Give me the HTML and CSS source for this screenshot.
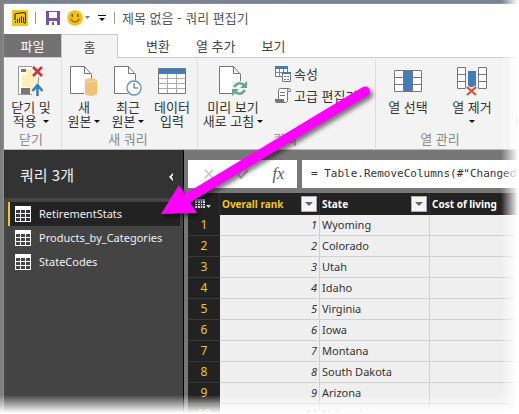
FILE: index.html
```html
<!DOCTYPE html>
<html lang="ko">
<head>
<meta charset="utf-8">
<title>제목 없음 - 쿼리 편집기</title>
<link rel="stylesheet" href="styles.css">
</head>
<body>
<div class="window">
  <header class="titlebar">
    <svg class="logo" width="16" height="16" viewBox="0 0 16 16"><path fill="#f2c811" d="M0 0h16v16H0z"/><path d="M3 10V4.500q0-1 1-1l8-1q1.500 0 1.500 1.500v8q0 1-1.500 1" fill="none" stroke="#222" stroke-width="1.100"/><path fill="#222" d="M3 11h1v2H3zM5 9h1v4H5zM7 8h1v5H7zM9 6h1v7H9zM11 7h1v6h-1z"/></svg>
    <span class="divider"></span>
    <button class="tool" aria-label="저장"><svg width="14" height="14" viewBox="0 0 14 14"><path fill="#7d4fa8" d="M0 0h14v14H0z"/><path fill="#fff" d="M3 1h8v6H3zM3 10h8v4H8v-3H6v3H3z"/></svg></button>
    <button class="tool smile" aria-label="피드백"><svg width="24" height="16" viewBox="0 0 24 16"><circle cx="8" cy="8" r="7.800" fill="#f5bf0b"/><path fill="#555" d="M4.500 4H6v3H4.500zM10 4h1.500v3H10z"/><path d="M3.500 9q4.500 6 9 0" fill="none" stroke="#6b5a1d" stroke-width="1.200"/><path fill="#777" d="M18 6h5l-2.500 3z"/></svg></button>
    <button class="tool" aria-label="도구 모음"><svg width="8" height="8" viewBox="0 0 8 8"><path fill="#111" d="M0 1h8v1H0zM1 4h6L4 7z"/></svg></button>
    <span class="divider"></span>
    <span class="title">제목 없음 - 쿼리 편집기</span>
  </header>
  <nav class="tabs">
    <button class="tab file">파일</button><button class="tab active">홈</button><button class="tab">변환</button><button class="tab">열 추가</button><button class="tab">보기</button>
  </nav>
  <section class="ribbon">
    <div class="group">
      <div class="commands">
        <button class="command wide"><svg width="26" height="30" viewBox="0 0 26 30"><path d="M.5.500h20v28H.5z" fill="#fff" stroke="#999"/><path fill="#fff0b5" d="M4 9h4V3h6v6l6 5v6h-5v8h-3v-7H4z"/><path fill="#777" d="M3 3h5v3H3zM3 22h9v6H3z"/><path fill="#f3f3f3" d="M14 0h12v11H14zM14 17h12v13H14z"/><path d="m15 1 9 9m0-9-9 9" stroke="#d12f36" stroke-width="2.600"/><path d="M19.500 30V19m-5 6 5-6 5 6" fill="none" stroke="#417db8" stroke-width="2.600"/></svg><span>닫기 및<br>적용 <i class="caret"></i></span></button>
      </div>
      <div class="caption">닫기</div>
    </div>
    <div class="group">
      <div class="commands">
        <button class="command"><svg width="28" height="30" viewBox="0 0 28 30"><path d="M.5.500h14l7 8v19H.5z" fill="#fff" stroke="#777"/><path d="M14.500.500v7h7" fill="none" stroke="#777"/><path d="M14 13h14v17H14z" fill="#f3f3f3"/><path fill="#efc376" d="M15 14q6-4 12 0v14q-6 4-12 0z"/><path d="M15 14q6 4 12 0" stroke="#f7dda9" fill="none"/></svg><span>새<br>원본<i class="caret"></i></span></button>
        <button class="command"><svg width="28" height="30" viewBox="0 0 28 30"><path d="M.5.500h14l7 8v19H.5z" fill="#fff" stroke="#777"/><path d="M14.500.500v7h7" fill="none" stroke="#777"/><circle cx="20" cy="22" r="8" fill="#f3f3f3"/><circle cx="20" cy="22" r="7" fill="#fff" stroke="#5c91c7" stroke-width="1.300"/><path d="M20 17v5h4" fill="none" stroke="#555"/></svg><span>최근<br>원본<i class="caret"></i></span></button>
        <button class="command"><svg width="28" height="30" viewBox="0 0 28 30"><path d="M.5 2.500h27v25H.5z" fill="#fff" stroke="#777"/><path fill="#417db8" d="M1 3h26v5H1z"/><path d="M1 12.500h26M1 17.500h26M1 22.500h26M9.500 8v19M18.500 8v19" stroke="#aaa"/></svg><span>데이터<br>입력</span></button>
      </div>
      <div class="caption">새 쿼리</div>
    </div>
    <div class="group query">
      <div class="commands">
        <button class="command refresh"><svg width="28" height="30" viewBox="0 0 28 30"><path d="M.5.500h14l7 8v19H.5z" fill="#fff" stroke="#777"/><path d="M14.500.500v7h7" fill="none" stroke="#777"/><path fill="#f3f3f3" d="M13 15h15v15H13z"/><path d="M15 21q5-7 11-1m0 4q-5 7-11 1" fill="none" stroke="#6da58c" stroke-width="2.500"/><path fill="#6da58c" d="M28 15v7h-7zM13 30v-7h7z"/></svg><span>미리 보기<br>새로 고침<i class="caret"></i></span></button>
        <div class="stack">
          <button class="small"><svg width="16" height="16" viewBox="0 0 16 16"><path d="M.5.500h12v10H.5z" fill="#fff" stroke="#777"/><path fill="#417db8" d="M0 0h13v3H0z"/><path d="M4.500 3v8M8.500 3v8M0 6.500h13" stroke="#888"/><path d="M7.500 6.500h8v9h-8z" fill="#fff" stroke="#777"/><path fill="#417db8" d="M7 6h9v2H7z"/><path fill="#777" d="M9 10h2v1H9zM12 10h2v1h-2zM9 13h2v1H9zM12 13h2v1h-2z"/></svg>속성</button>
          <button class="small"><svg width="16" height="16" viewBox="0 0 16 16"><path d="M3.500 11V2.500q0-2 2-2h8q2 0 2 2v1h-3v9q0 2-2 2H2.500" fill="#fff" stroke="#777"/><path d="M12.500 3.500v-1q0-2 1.500-2M5 4.500h5M5 7.500h5" fill="none" stroke="#777"/><path fill="#777" d="M0 11h9v2q0 2 2 2H2q-2 0-2-2z"/></svg>고급 편집기</button>
        </div>
      </div>
      <div class="caption">쿼리</div>
    </div>
    <div class="group">
      <div class="commands">
        <button class="command column"><svg width="28" height="30" viewBox="0 0 28 30"><path d="M.5 4.500h27v21H.5z" fill="#fff" stroke="#777"/><path fill="#417db8" d="M10 5h8v20h-8z"/><path d="M9.500 4v22M18.500 4v22M1 11.500h8M1 18.500h8M19 11.500h8M19 18.500h8" stroke="#777"/></svg><span>열 선택</span></button>
        <button class="command column"><svg width="30" height="30" viewBox="0 0 30 30"><path d="M.5 1.500h8v21h-8zM21.500 1.500h8v21h-8z" fill="#fff" stroke="#777"/><path d="M0 8.500h8M0 15.500h8M22 8.500h8M22 15.500h8" stroke="#777"/><path fill="#417db8" d="M11 5h8v16h-8z"/><path d="m10 21 9 8m0-8-9 8" stroke="#f3f3f3" stroke-width="4"/><path d="m10 21 9 8m0-8-9 8" stroke="#d65336" stroke-width="2.200"/></svg><span>열 제거<br><i class="caret below"></i></span></button>
      </div>
      <div class="caption">열 관리</div>
    </div>
    <div class="group last"><button class="command">R</button></div>
  </section>
  <div class="workspace">
    <aside class="sidebar">
      <div class="side-head"><span>쿼리 3개</span><button class="collapse" aria-label="접기"><svg width="4" height="8" viewBox="0 0 4 8"><path fill="#fff" d="M4 0v2L2.500 4 4 6v2L0 4z"/></svg></button></div>
      <div class="queries">
        <button class="item selected"><svg width="16" height="16" viewBox="0 0 16 16"><path fill="#fff" d="M0 0h16v16H0z"/><path fill="#333" d="M1 4h4v3H1zM6 4h4v3H6zM11 4h4v3h-4zM1 8h4v3H1zM6 8h4v3H6zM11 8h4v3h-4zM1 12h4v3H1zM6 12h4v3H6zM11 12h4v3h-4z"/></svg>RetirementStats</button>
        <button class="item"><svg width="16" height="16" viewBox="0 0 16 16"><path fill="#fff" d="M0 0h16v16H0z"/><path fill="#444" d="M1 4h4v3H1zM6 4h4v3H6zM11 4h4v3h-4zM1 8h4v3H1zM6 8h4v3H6zM11 8h4v3h-4zM1 12h4v3H1zM6 12h4v3H6zM11 12h4v3h-4z"/></svg>Products_by_Categories</button>
        <button class="item"><svg width="16" height="16" viewBox="0 0 16 16"><path fill="#fff" d="M0 0h16v16H0z"/><path fill="#444" d="M1 4h4v3H1zM6 4h4v3H6zM11 4h4v3h-4zM1 8h4v3H1zM6 8h4v3H6zM11 8h4v3h-4zM1 12h4v3H1zM6 12h4v3H6zM11 12h4v3h-4z"/></svg>StateCodes</button>
      </div>
    </aside>
    <main class="main">
      <div class="formula-bar">
        <div class="formula-tools">
          <button aria-label="취소"><svg width="10" height="10" viewBox="0 0 10 10"><path d="m1 1 8 8m0-8L1 9" stroke="#c4c4c4" stroke-width="1.600"/></svg></button>
          <button aria-label="확인"><svg width="12" height="10" viewBox="0 0 12 10"><path d="m1 5 3 4 7-8" fill="none" stroke="#bbb" stroke-width="2"/></svg></button>
          <button class="fx">fx</button>
        </div>
        <input class="formula" aria-label="수식" value="= Table.RemoveColumns(#&quot;Changed">
      </div>
      <table class="grid">
        <colgroup><col class="c-num"><col class="c-rank"><col class="c-state"><col></colgroup>
        <thead><tr>
          <th><button class="corner" aria-label="표"><svg width="17" height="10" viewBox="0 0 17 10"><path fill="#ddd" d="M0 0h10v9H0z"/><path fill="#65a0b8" d="M0 0h10v2H0z"/><path d="M0 4.500h10M0 6.500h10M2.500 2v7M5.500 2v7M7.500 2v7" stroke="#444"/><path fill="#ddd" d="M11 6h5l-2.500 3z"/></svg></button></th>
          <th class="rank-head"><div class="head">Overall rank<button class="filter" aria-label="필터"><svg width="8" height="4" viewBox="0 0 8 4"><path fill="#666" d="M0 0h8L4 4z"/></svg></button></div></th>
          <th><div class="head">State<button class="filter" aria-label="필터"><svg width="8" height="4" viewBox="0 0 8 4"><path fill="#666" d="M0 0h8L4 4z"/></svg></button></div></th>
          <th><div class="head">Cost of living</div></th>
        </tr></thead>
        <tbody>
          <tr><th>1</th><td>1</td><td>Wyoming</td><td></td></tr>
          <tr><th>2</th><td>2</td><td>Colorado</td><td></td></tr>
          <tr><th>3</th><td>3</td><td>Utah</td><td></td></tr>
          <tr><th>4</th><td>4</td><td>Idaho</td><td></td></tr>
          <tr><th>5</th><td>5</td><td>Virginia</td><td></td></tr>
          <tr><th>6</th><td>6</td><td>Iowa</td><td></td></tr>
          <tr><th>7</th><td>7</td><td>Montana</td><td></td></tr>
          <tr><th>8</th><td>8</td><td>South Dakota</td><td></td></tr>
          <tr><th>9</th><td>9</td><td>Arizona</td><td></td></tr>
          <tr><th>10</th><td>10</td><td>Nebraska</td><td></td></tr>
        </tbody>
      </table>
    </main>
  </div>
</div>
<svg class="pointer" width="230" height="150" viewBox="150 80 230 150"><path d="M365 91.500 188 198" stroke="#f0f" stroke-width="10" stroke-linecap="round"/><path fill="#f0f" d="m161 214 18-29 18 28z"/></svg>
<div class="fade"></div>
</body>
</html>
```
FILE: styles.css
```css
* { box-sizing: border-box; }
body {
  margin: 0;
  height: 100vh;
  overflow: hidden;
  background: #808080;
  padding: 3px 0 0 3px;
  font: 11px/14px "Noto Sans", "Noto Sans CJK KR", sans-serif;
  color: #333;
}
button {
  font: inherit;
  color: inherit;
  background: none;
  border: 0;
  padding: 0;
  margin: 0;
}
svg { display: block; flex: none; }
.window {
  height: 100%;
  display: flex;
  flex-direction: column;
  overflow: hidden;
  background: #fff;
  border: solid #6a93d4;
  border-width: 1px 0 0 1px;
}
.titlebar, .tabs, .ribbon {
  flex: none;
  display: flex;
  font-family: "Noto Sans CJK KR", sans-serif;
  font-size: 13px;
  white-space: nowrap;
}
.titlebar {
  height: 30px;
  align-items: center;
  padding: 0 0 2px 8px;
  color: #555;
}
.divider { width: 1px; height: 12px; background: #999; margin: 0 7px; }
.tool { margin-left: 3px; }
.tool + .tool { margin-left: 7px; }
.tool + .divider { margin-left: 8px; }
.tabs { height: 24px; border-bottom: 1px solid #ccc; }
.tab { padding: 0 13px; height: 23px; color: #444; }
.tab.file { width: 57px; background: #727272; color: #fff; }
.tab.active {
  width: 57px;
  height: 24px;
  margin-right: 15px;
  background: #f3f3f3;
  border: 1px solid #ccc;
  border-bottom: 0;
}
.ribbon {
  height: 92px;
  background: #f3f3f3;
  border-bottom: 1px solid #bbb;
  padding: 2px 0 1px;
}
.group {
  flex: none;
  display: flex;
  flex-direction: column;
  justify-content: space-between;
  padding: 6px 3px 0 0;
  border-right: 1px solid #ddd;
}
.commands { display: flex; }
.command {
  width: 44px;
  display: flex;
  flex-direction: column;
  align-items: center;
  gap: 4px;
}
.command.wide { width: 54px; }
.command.refresh { width: 70px; }
.command.column { width: 64px; }
.caption { text-align: center; color: #888; line-height: 18px; }
.caret {
  display: inline-block;
  margin-left: 3px;
  vertical-align: 3px;
  border: 3px solid transparent;
  border-top-color: #111;
  border-bottom: 0;
}
.caret.below { margin-left: 0; }
.query { width: 178px; }
.stack { display: flex; flex-direction: column; gap: 6px; padding-left: 7px; }
.small { display: flex; align-items: center; gap: 3px; }
.group.last { border: 0; padding: 54px 0 0 7px; color: #111; }
.group.last .command { width: auto; }
.workspace { flex: 1; display: flex; min-height: 0; }
.sidebar {
  flex: none;
  width: 180px;
  background: #444;
  border-right: 1px solid #000;
  color: #f0f0f0;
}
.side-head {
  height: 48px;
  display: flex;
  align-items: center;
  justify-content: space-between;
  padding: 2px 10px 0 16px;
  background: #333;
  font: 15px/20px "Noto Sans CJK KR", sans-serif;
}
.collapse { padding-top: 3px; }
.queries { padding: 4px 3px 0 4px; }
.item {
  width: 100%;
  height: 24px;
  display: flex;
  align-items: center;
  gap: 8px;
  padding-left: 5px;
  border-left: 2px solid transparent;
}
.item.selected { background: #222; border-color: #f2c811; }
.main {
  flex: 1;
  min-width: 0;
  padding: 10px 0 0 4px;
  background: #777;
  overflow: hidden;
}
.formula-bar { display: flex; gap: 5px; height: 28px; margin-bottom: 5px; }
.formula-tools {
  flex: none;
  width: 109px;
  display: flex;
  align-items: center;
  justify-content: space-between;
  padding: 0 13px 0 16px;
  background: #fff;
}
.fx { font: italic 16px/20px "Liberation Serif", serif; color: #555; }
.formula {
  flex: 1;
  min-width: 0;
  border: 0;
  padding: 0 0 0 9px;
  background: #fff;
  color: #333;
  font: 11px/14px "DejaVu Sans Mono", monospace;
}
.grid {
  width: 100%;
  table-layout: fixed;
  border-collapse: separate;
  border-spacing: 0;
  background: #efefef;
}
.c-num { width: 32px; }
.c-rank { width: 100px; }
.c-state { width: 110px; }
.grid th, .grid td { height: 21px; padding: 0 2px; white-space: nowrap; }
.grid td { border: solid #d0d0d0; border-width: 0 1px 1px 0; }
.grid td:nth-child(2) { text-align: right; font-style: italic; }
.grid tbody th {
  background: #222;
  border-bottom: 1px solid #383838;
  color: #f2c811;
  font-weight: 400;
  font-size: 12px;
}
.grid thead th {
  height: 22px;
  background: #222;
  border-right: 1px solid #333;
  color: #fff;
  font: bold 10px/14px "Noto Sans", sans-serif;
}
.grid thead .rank-head { color: #f2c811; }
.head { display: flex; align-items: center; justify-content: space-between; }
.corner { display: block; margin: 0 auto; }
.filter {
  width: 16px;
  height: 16px;
  display: grid;
  place-items: center;
  background: #f5f5f5;
  border: 1px solid #aab;
}
.pointer {
  position: absolute;
  left: 150px;
  top: 80px;
  filter: drop-shadow(3px 3px 2px rgba(0, 0, 0, .5));
  pointer-events: none;
}
.fade {
  position: absolute;
  inset: 0;
  pointer-events: none;
  background:
    linear-gradient(to left, #fff 1px, transparent 18px),
    linear-gradient(to top, #fff 1px, transparent 19px);
}
```
